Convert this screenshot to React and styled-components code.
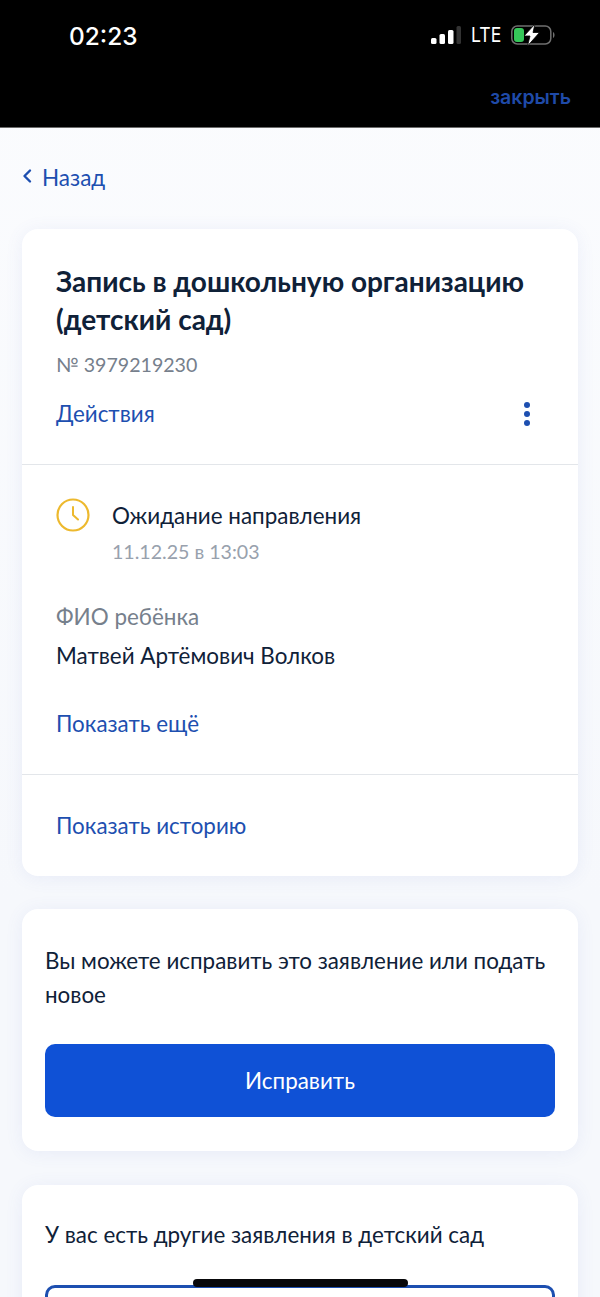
import styled, { createGlobalStyle } from 'styled-components';

const GlobalStyle = createGlobalStyle`
  html, body { margin: 0; padding: 0; height: 1297px; overflow: hidden; background: #f5f7fb; }
  body { font-family: Lato, "Noto Sans", sans-serif; color: #0f2138; }
  * { box-sizing: border-box; }
`;

const Screen = styled.div`
  position: relative;
  width: 600px;
  height: 1297px;
  overflow: hidden;
  background: linear-gradient(#fbfcfe 0, #f6f8fc 900px);
`;

const Header = styled.header`
  height: 128px;
  background: #000;
  border-bottom: 1px solid #6b6b6b;
  padding: 19px 29px 0 70px;
  display: flex;
  flex-direction: column;
`;

const StatusBar = styled.div`
  display: flex;
  justify-content: space-between;
  align-items: center;
  height: 34px;
`;

const Time = styled.span`
  font-family: Inter, Roboto, sans-serif;
  font-size: 24.4px;
  font-weight: 500;
  color: #fff;
  margin-left: -1px;
`;

const StatusIcons = styled.div`
  display: flex;
  align-items: center;
  gap: 10px;
  margin-right: 16px;
  margin-bottom: 2px;
`;

const Lte = styled.span`
  font-family: Inter, Roboto, sans-serif;
  font-size: 20px;
  font-weight: 400;
  color: #fff;
  transform: scaleX(0.88);
  transform-origin: center;
  margin: 0 -2px;
`;

const Close = styled.span`
  align-self: flex-end;
  margin-top: 32px;
  font-family: Inter, Roboto, sans-serif;
  font-size: 19.5px;
  font-weight: 600;
  line-height: 24px;
  color: #1f4aa8;
`;

const Content = styled.main`
  padding: 0 22px;
  display: flex;
  flex-direction: column;
`;

const BackLink = styled.div`
  display: flex;
  align-items: center;
  gap: 10px;
  height: 101px;
  padding-bottom: 2px;
  font-size: 22.5px;
  color: #1d4fb0;

  svg {
    margin-top: -4px;
  }
`;

const Card = styled.section`
  background: #fff;
  border-radius: 16px;
  box-shadow: 0 2px 18px rgba(90, 110, 200, 0.09);
  margin-bottom: ${p => p.$gap}px;
`;

const CardHead = styled.div`
  padding: 33px 34px 0;
  height: 236px;
  border-bottom: 1px solid #e3e6ea;
`;

const Title = styled.h1`
  margin: 0;
  font-size: 28px;
  font-weight: 700;
  line-height: 38px;
  color: #0f2138;
`;

const Number = styled.div`
  margin-top: 12px;
  font-size: 19.6px;
  line-height: 30px;
  color: #76808c;
`;

const ActionRow = styled.div`
  display: flex;
  justify-content: space-between;
  align-items: center;
  margin-top: 18px;
  height: 32px;
`;

const LinkText = styled.span`
  font-size: 22.4px;
  line-height: 32px;
  color: #1d4fb0;
`;

const Dots = styled.div`
  display: flex;
  flex-direction: column;
  gap: 3px;
  margin-right: 14px;
`;

const Dot = styled.i`
  display: block;
  width: 6px;
  height: 6px;
  border-radius: 50%;
  background: #1d4fb0;
`;

const CardBody = styled.div`
  padding: 33px 34px 0;
  height: 310px;
  border-bottom: 1px solid #e3e6ea;
`;

const StatusRow = styled.div`
  display: flex;
  gap: 22px;
`;

const StatusText = styled.div`
  display: flex;
  flex-direction: column;
`;

const StatusTitle = styled.div`
  font-size: 22.45px;
  line-height: 36px;
  color: #0f2138;
`;

const StatusDate = styled.div`
  font-size: 19.6px;
  line-height: 35px;
  color: #98a1ad;
`;

const FieldLabel = styled.div`
  margin-top: 28px;
  font-size: 22.45px;
  line-height: 40px;
  color: #76808c;
`;

const FieldValue = styled.div`
  font-size: 22.45px;
  line-height: 38px;
  color: #0f2138;
`;

const ShowMore = styled.div`
  margin-top: 33px;
`;

const CardFoot = styled.div`
  padding: 35px 34px 34px;
`;

const PanelBody = styled.div`
  padding: ${p => p.$top}px 23px 34px;
`;

const Paragraph = styled.p`
  margin: 0;
  font-size: 22.4px;
  line-height: 34px;
  color: #0f2138;
`;

const PrimaryButton = styled.button`
  display: block;
  width: 100%;
  height: 73px;
  margin-top: 32px;
  border: none;
  border-radius: 10px;
  background: #0f51d6;
  color: #fff;
  font-family: inherit;
  font-size: 22.4px;
`;

const OutlineButton = styled.button`
  display: block;
  width: 100%;
  height: 73px;
  margin-top: 33px;
  border: 3px solid #1d4fb0;
  border-radius: 10px;
  background: #fff;
`;

const HomeBar = styled.div`
  position: absolute;
  left: 193px;
  top: 1279px;
  width: 215px;
  height: 8px;
  border-radius: 4px;
  background: #08080a;
`;

const Signal = () => (
  <svg width="30" height="18" viewBox="0 0 30 18">
    <rect x="0" y="12" width="5.5" height="6" rx="1.5" fill="#fff" />
    <rect x="8.5" y="8" width="5.5" height="10" rx="1.5" fill="#fff" />
    <rect x="17" y="4" width="5.5" height="14" rx="1.5" fill="#fff" />
    <rect x="25.5" y="0" width="4.5" height="18" rx="1.5" fill="#333" />
  </svg>
);

const Battery = () => (
  <svg width="44" height="22" viewBox="0 0 44 22">
    <rect x="0.8" y="2" width="39" height="18" rx="5.5" fill="none" stroke="#6f6f6f" strokeWidth="1.5" />
    <rect x="3" y="4" width="10" height="14" rx="3" fill="#35c759" />
    <path d="M42 8 C44 9 44 13 42 14 Z" fill="#6f6f6f" />
    <path d="M24 0 L13 12 L19 12 L16.5 22 L28.5 8.5 L22 8.5 Z" fill="#fff" stroke="#000" strokeWidth="0.8" />
  </svg>
);

const Chevron = () => (
  <svg width="10" height="16" viewBox="0 0 10 16">
    <path d="M8 2.5 L2.5 8 L8 13.5" fill="none" stroke="#1d4fb0" strokeWidth="2.4" strokeLinecap="round" strokeLinejoin="round" />
  </svg>
);

const Clock = () => (
  <svg width="34" height="34" viewBox="0 0 34 34">
    <circle cx="17" cy="17" r="15.5" fill="none" stroke="#edb92e" strokeWidth="2.2" />
    <path d="M17 9 V17 L22 21.5" fill="none" stroke="#edb92e" strokeWidth="2" strokeLinecap="round" strokeLinejoin="round" />
  </svg>
);

export default function App() {
  return (
    <Screen>
      <GlobalStyle />
      <Header>
        <StatusBar>
          <Time>02:23</Time>
          <StatusIcons>
            <Signal />
            <Lte>LTE</Lte>
            <Battery />
          </StatusIcons>
        </StatusBar>
        <Close>закрыть</Close>
      </Header>
      <Content>
        <BackLink>
          <Chevron />
          Назад
        </BackLink>
        <Card $gap={33}>
          <CardHead>
            <Title>Запись в дошкольную организацию (детский сад)</Title>
            <Number>№ 3979219230</Number>
            <ActionRow>
              <LinkText>Действия</LinkText>
              <Dots>
                <Dot />
                <Dot />
                <Dot />
              </Dots>
            </ActionRow>
          </CardHead>
          <CardBody>
            <StatusRow>
              <Clock />
              <StatusText>
                <StatusTitle>Ожидание направления</StatusTitle>
                <StatusDate>11.12.25 в 13:03</StatusDate>
              </StatusText>
            </StatusRow>
            <FieldLabel>ФИО ребёнка</FieldLabel>
            <FieldValue>Матвей Артёмович Волков</FieldValue>
            <ShowMore>
              <LinkText>Показать ещё</LinkText>
            </ShowMore>
          </CardBody>
          <CardFoot>
            <LinkText>Показать историю</LinkText>
          </CardFoot>
        </Card>
        <Card $gap={34}>
          <PanelBody $top={35}>
            <Paragraph>Вы можете исправить это заявление или подать новое</Paragraph>
            <PrimaryButton>Исправить</PrimaryButton>
          </PanelBody>
        </Card>
        <Card $gap={34}>
          <PanelBody $top={33}>
            <Paragraph>У вас есть другие заявления в детский сад</Paragraph>
            <OutlineButton />
          </PanelBody>
        </Card>
      </Content>
      <HomeBar />
    </Screen>
  );
}
